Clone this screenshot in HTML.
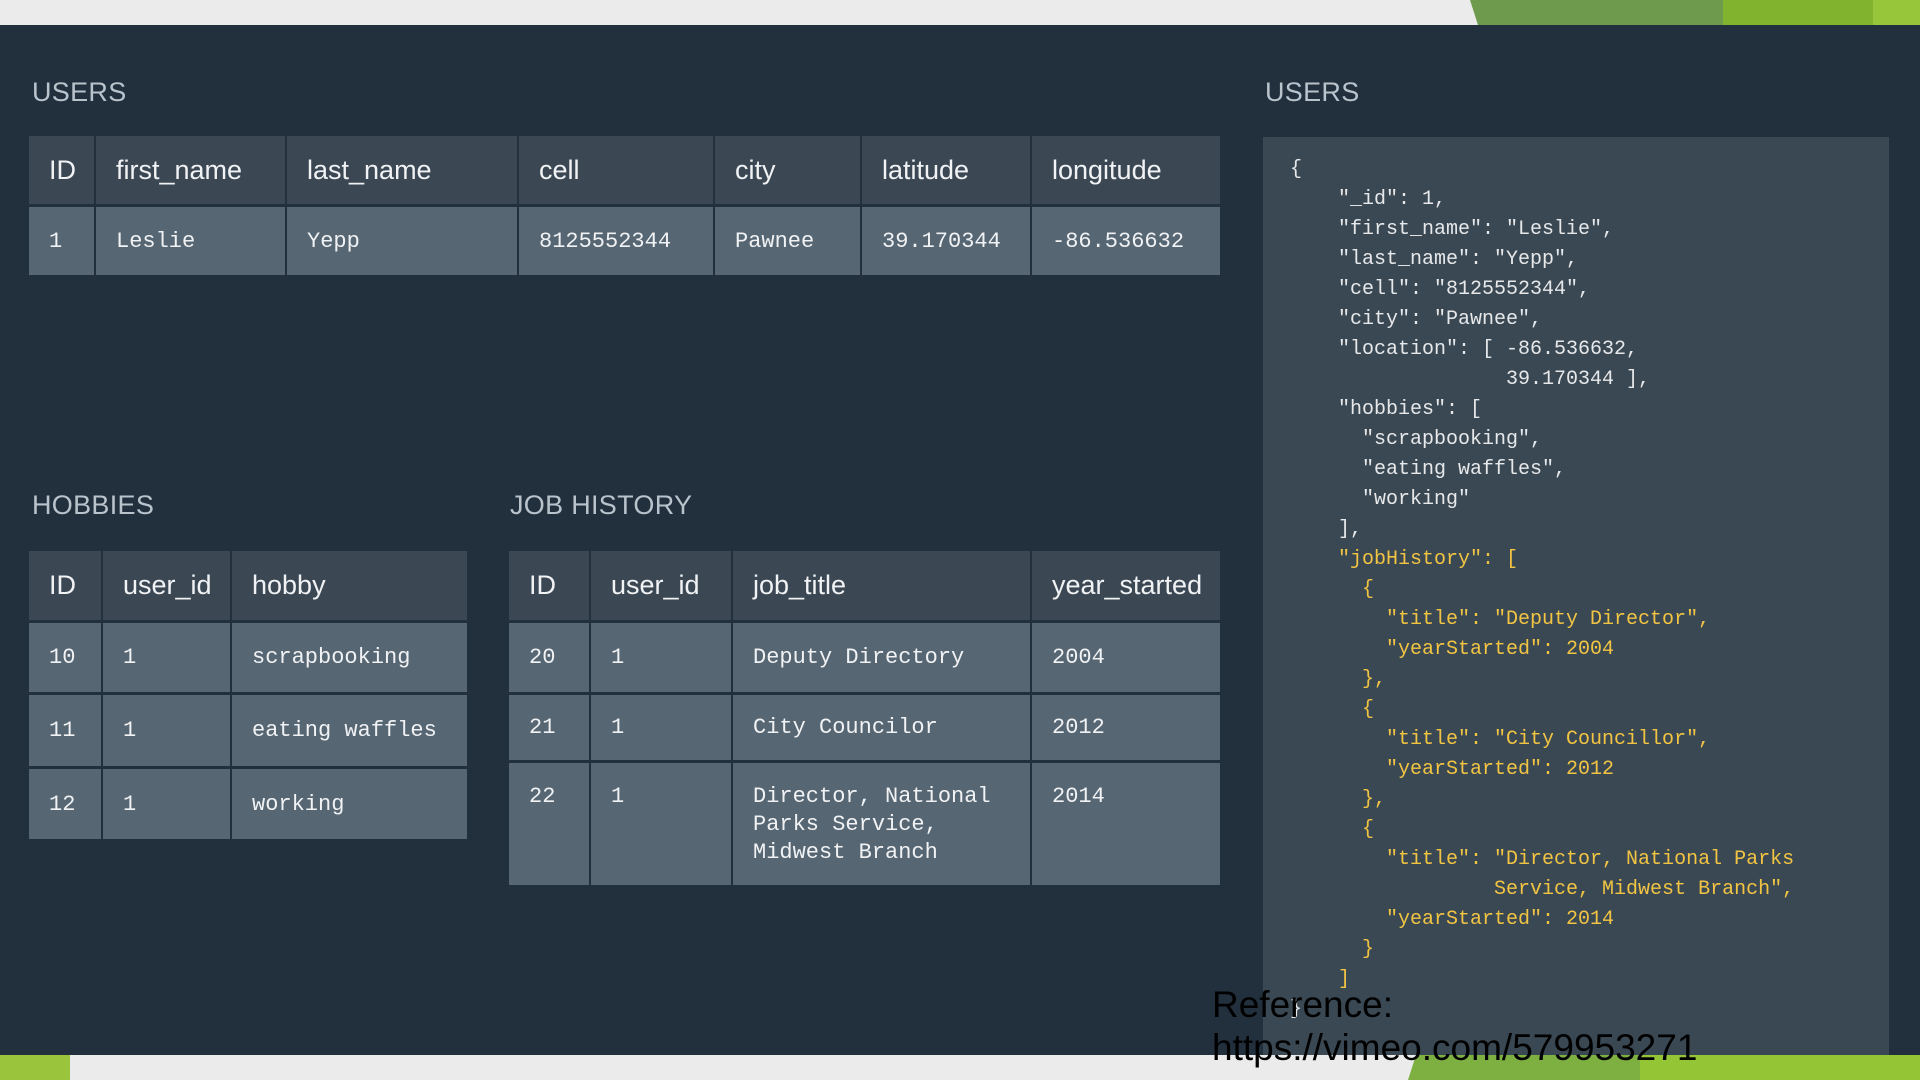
<!DOCTYPE html>
<html><head><meta charset="utf-8"><style>
*{margin:0;padding:0;box-sizing:border-box}
body{width:1920px;height:1080px;overflow:hidden;background:#222f3d;position:relative;font-family:"Liberation Sans",sans-serif}
.a{position:absolute}
.t{color:#b9c3cc;font-size:27px;font-family:"Liberation Sans Narrow","Liberation Sans",sans-serif;letter-spacing:0.3px}
.c{position:absolute;display:flex;align-items:center;padding-left:20px;color:#f0f2f4}
.h{background:#3b4854;font-family:"Liberation Sans Narrow","Liberation Sans",sans-serif;font-size:27px}
.d{background:#566673;font-family:"Liberation Mono",monospace;font-size:22px}
.top{align-items:flex-start;padding-top:20px;line-height:28px}
.j{position:absolute;font-family:"Liberation Mono",monospace;font-size:20px;color:#e6e8ea;white-space:pre;line-height:30px}
.y{color:#f2c443}
</style></head><body>
<div class="a" style="left:0;top:0;width:1920px;height:25px;background:#ebebeb"></div>
<div class="a" style="left:1470px;top:0;width:260px;height:25px;background:#6e9a4e;clip-path:polygon(0 0,100% 0,100% 100%,8px 100%)"></div>
<div class="a" style="left:1723px;top:0;width:150px;height:25px;background:#82b32f"></div>
<div class="a" style="left:1873px;top:0;width:47px;height:25px;background:#98c63a"></div>
<div class="a" style="left:0;top:1055px;width:1920px;height:25px;background:#ebebeb"></div>
<div class="a" style="left:0;top:1055px;width:70px;height:25px;background:#9ac43c"></div>
<div class="a" style="left:1408px;top:1055px;width:512px;height:25px;background:#7db041;clip-path:polygon(8px 0,100% 0,100% 100%,0 100%)"></div>
<div class="a" style="left:1640px;top:1055px;width:280px;height:25px;background:#94c535"></div>

<div class="a t" style="left:32px;top:77px">USERS</div>
<div class="a t" style="left:32px;top:490px">HOBBIES</div>
<div class="a t" style="left:510px;top:490px">JOB HISTORY</div>
<div class="a t" style="left:1265px;top:77px">USERS</div>

<!-- users table -->
<div class="c h" style="left:29px;top:136px;width:65px;height:68px">ID</div>
<div class="c h" style="left:96px;top:136px;width:189px;height:68px">first_name</div>
<div class="c h" style="left:287px;top:136px;width:230px;height:68px">last_name</div>
<div class="c h" style="left:519px;top:136px;width:194px;height:68px">cell</div>
<div class="c h" style="left:715px;top:136px;width:145px;height:68px">city</div>
<div class="c h" style="left:862px;top:136px;width:168px;height:68px">latitude</div>
<div class="c h" style="left:1032px;top:136px;width:188px;height:68px">longitude</div>
<div class="c d" style="left:29px;top:207px;width:65px;height:68px">1</div>
<div class="c d" style="left:96px;top:207px;width:189px;height:68px">Leslie</div>
<div class="c d" style="left:287px;top:207px;width:230px;height:68px">Yepp</div>
<div class="c d" style="left:519px;top:207px;width:194px;height:68px">8125552344</div>
<div class="c d" style="left:715px;top:207px;width:145px;height:68px">Pawnee</div>
<div class="c d" style="left:862px;top:207px;width:168px;height:68px">39.170344</div>
<div class="c d" style="left:1032px;top:207px;width:188px;height:68px">-86.536632</div>

<!-- hobbies -->
<div class="c h" style="left:29px;top:551px;width:72px;height:69px">ID</div>
<div class="c h" style="left:103px;top:551px;width:127px;height:69px">user_id</div>
<div class="c h" style="left:232px;top:551px;width:235px;height:69px">hobby</div>
<div class="c d" style="left:29px;top:623px;width:72px;height:69px">10</div>
<div class="c d" style="left:103px;top:623px;width:127px;height:69px">1</div>
<div class="c d" style="left:232px;top:623px;width:235px;height:69px">scrapbooking</div>
<div class="c d" style="left:29px;top:695px;width:72px;height:71px">11</div>
<div class="c d" style="left:103px;top:695px;width:127px;height:71px">1</div>
<div class="c d" style="left:232px;top:695px;width:235px;height:71px">eating waffles</div>
<div class="c d" style="left:29px;top:769px;width:72px;height:70px">12</div>
<div class="c d" style="left:103px;top:769px;width:127px;height:70px">1</div>
<div class="c d" style="left:232px;top:769px;width:235px;height:70px">working</div>

<!-- job history -->
<div class="c h" style="left:509px;top:551px;width:80px;height:69px">ID</div>
<div class="c h" style="left:591px;top:551px;width:140px;height:69px">user_id</div>
<div class="c h" style="left:733px;top:551px;width:297px;height:69px">job_title</div>
<div class="c h" style="left:1032px;top:551px;width:188px;height:69px">year_started</div>
<div class="c d" style="left:509px;top:623px;width:80px;height:69px">20</div>
<div class="c d" style="left:591px;top:623px;width:140px;height:69px">1</div>
<div class="c d" style="left:733px;top:623px;width:297px;height:69px">Deputy Directory</div>
<div class="c d" style="left:1032px;top:623px;width:188px;height:69px">2004</div>
<div class="c d" style="left:509px;top:695px;width:80px;height:65px">21</div>
<div class="c d" style="left:591px;top:695px;width:140px;height:65px">1</div>
<div class="c d" style="left:733px;top:695px;width:297px;height:65px">City Councilor</div>
<div class="c d" style="left:1032px;top:695px;width:188px;height:65px">2012</div>
<div class="c d top" style="left:509px;top:763px;width:80px;height:122px">22</div>
<div class="c d top" style="left:591px;top:763px;width:140px;height:122px">1</div>
<div class="c d top" style="left:733px;top:763px;width:297px;height:122px">Director, National<br>Parks Service,<br>Midwest Branch</div>
<div class="c d top" style="left:1032px;top:763px;width:188px;height:122px">2014</div>

<!-- json panel -->
<div class="a" style="left:1263px;top:137px;width:626px;height:918px;background:#3a4853"></div>
<div class="j" style="left:1290px;top:155px">{
    "_id": 1,
    "first_name": "Leslie",
    "last_name": "Yepp",
    "cell": "8125552344",
    "city": "Pawnee",
    "location": [ -86.536632,
                  39.170344 ],
    "hobbies": [
      "scrapbooking",
      "eating waffles",
      "working"
    ],
<span class="y">    "jobHistory": [
      {
        "title": "Deputy Director",
        "yearStarted": 2004
      },
      {
        "title": "City Councillor",
        "yearStarted": 2012
      },
      {
        "title": "Director, National Parks
                 Service, Midwest Branch",
        "yearStarted": 2014
      }
    ]</span>
}</div>

<div class="a" style="left:1212px;top:983px;font-family:'Liberation Sans Narrow','Liberation Sans',sans-serif;font-size:37px;line-height:43px;color:#000">Reference:<br>https://vimeo.com/579953271</div>
</body></html>
